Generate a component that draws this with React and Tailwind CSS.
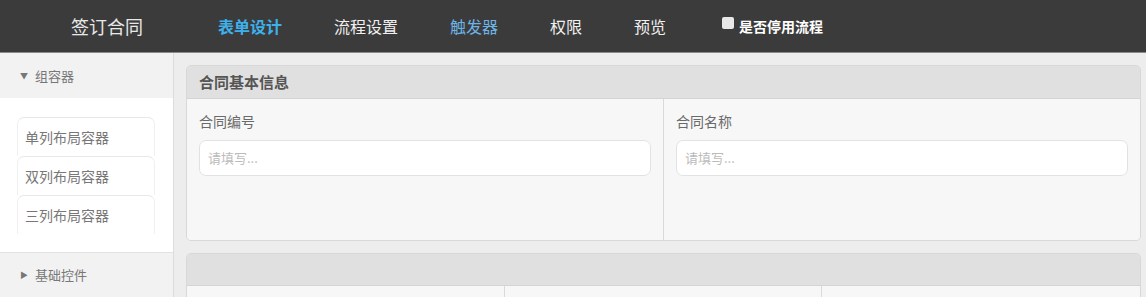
export default function App() {
  const font = { fontFamily: '"Noto Sans CJK SC", "Noto Sans", sans-serif' };
  return (
    <div className="w-[1146px] h-[297px] overflow-hidden flex flex-col bg-[#ededed]" style={font}>
      <div className="h-[53px] shrink-0 bg-[#3b3b3b] border-b border-[#8a8a8a] flex items-center">
        <div className="w-[214px] text-center text-[18px] text-[#e8e8e8]">签订合同</div>
        <div className="flex items-center gap-[52px] text-[16px] pl-[4px]">
          <span className="text-[#3eb1ec] font-bold">表单设计</span>
          <span className="text-[#f0f0f0]">流程设置</span>
          <span className="text-[#6eb3e6]">触发器</span>
          <span className="text-[#f0f0f0]">权限</span>
          <span className="text-[#f0f0f0]">预览</span>
          <span className="flex items-center gap-[5px] text-[14px] font-bold text-white pl-[4px]">
            <span className="w-[12px] h-[12px] bg-[#e8e8e8] rounded-[2px] inline-block -mt-[6px]" />
            是否停用流程
          </span>
        </div>
      </div>
      <div className="flex flex-1 min-h-0">
        <div className="w-[174px] shrink-0 border-r border-[#dcdcdc] flex flex-col">
          <div className="h-[45px] bg-[#f2f2f2] flex items-center pl-[20px] text-[13px] text-[#777]">
            <span className="text-[8px] mr-[7px]">▼</span>组容器
          </div>
          <div className="h-[154px] bg-white pt-[19px] pl-[17px] pr-[18px]">
            {["单列布局容器", "双列布局容器", "三列布局容器"].map((t) => (
              <div key={t} className="h-[39px] border-t border-x border-[#f0f0f0] border-t-[#e8e8e8] rounded-t-[7px] flex items-center pl-[7px] text-[14px] text-[#777]">
                {t}
              </div>
            ))}
          </div>
          <div className="flex-1 bg-[#f2f2f2] border-t border-[#e2e2e2] flex items-center pl-[20px] text-[13px] text-[#777]">
            <span className="text-[8px] mr-[7px]">▶</span>基础控件
          </div>
        </div>
        <div className="flex-1 pl-[12px] pr-[5px] pt-[12px] flex flex-col gap-[12px]">
          <div className="h-[176px] shrink-0 rounded-[5px] border border-[#d8d8d8] flex flex-col overflow-hidden">
            <div className="h-[33px] bg-[#e0e0e0] border-b border-[#d4d4d4] flex items-center pl-[12px] text-[15px] font-bold text-[#555]">
              合同基本信息
            </div>
            <div className="flex-1 bg-[#f7f7f7] flex">
              {["合同编号", "合同名称"].map((l, i) => (
                <div key={l} className={"flex-1 px-[12px] pt-[12px] " + (i === 0 ? "border-r border-[#dadada]" : "")}>
                  <div className="text-[14px] text-[#6a6a6a] leading-[20px]">{l}</div>
                  <div className="mt-[9px] h-[36px] bg-white border border-[#e2e2e2] rounded-[7px] flex items-center pl-[8px] text-[13px] text-[#bbb]">
                    请填写...
                  </div>
                </div>
              ))}
            </div>
          </div>
          <div className="flex-1 rounded-t-[5px] border border-b-0 border-[#d8d8d8] flex flex-col overflow-hidden">
            <div className="h-[32px] shrink-0 bg-[#e0e0e0] border-b border-[#d4d4d4]" />
            <div className="flex-1 bg-[#f7f7f7] grid grid-cols-3">
              <div className="border-r border-[#dadada]" />
              <div className="border-r border-[#dadada]" />
              <div />
            </div>
          </div>
        </div>
      </div>
    </div>
  );
}
